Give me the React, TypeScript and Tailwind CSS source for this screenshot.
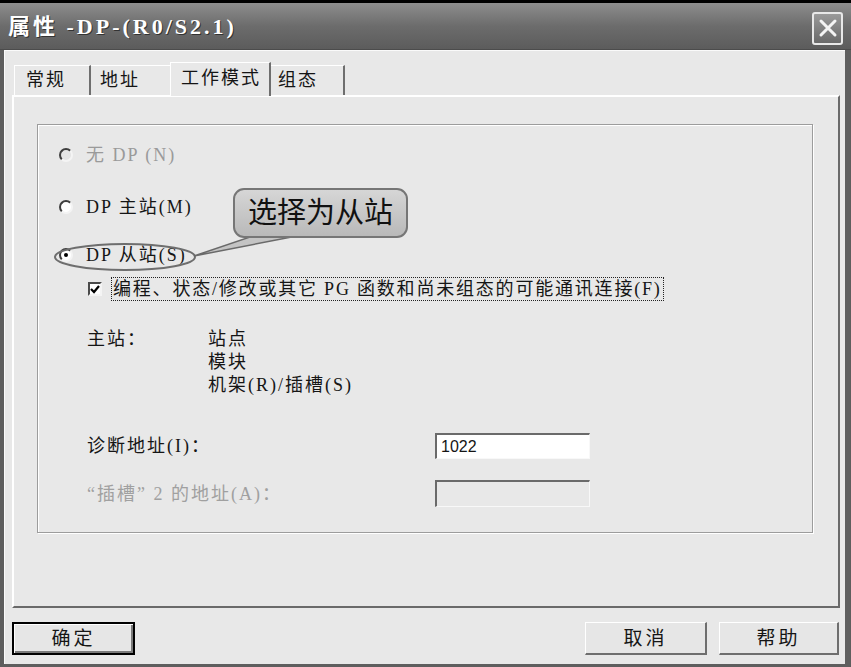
import React from 'react';

function Radio({ checked, disabled }: { checked?: boolean; disabled?: boolean }) {
  return (
    <span
      className={`relative inline-flex items-center justify-center w-[14px] h-[14px] rounded-full border-2 border-t-[#3e3e3e] border-l-[#3e3e3e] border-b-[#f4f4f4] border-r-[#f4f4f4] ${
        disabled ? 'bg-[#e4e4e4]' : 'bg-white'
      }`}
    >
      {checked && <span className="w-[4px] h-[4px] rounded-full bg-black" />}
    </span>
  );
}

function Button({ label, primary }: { label: string; primary?: boolean }) {
  return (
    <div
      className={`h-[33px] flex items-center justify-center bg-[#e6e6e6] ${
        primary
          ? 'w-[123px] border-2 border-black shadow-[inset_1px_1px_0_#fff,inset_-2px_-2px_0_#7a7a7a]'
          : 'border-t border-l border-white border-r-2 border-b-2 border-r-[#6e6e6e] border-b-[#6e6e6e]'
      }`}
    >
      <span className="text-[19px] leading-none tracking-[3px]">{label}</span>
    </div>
  );
}

export default function App() {
  return (
    <div className="relative w-[851px] h-[667px] bg-[#5e5e5e] border-t-[3px] border-black flex flex-col overflow-hidden font-['Liberation_Serif','Noto_Sans_CJK_SC',serif] text-[18px] tracking-[2px] text-[#151515]">
      {/* title bar */}
      <div className="h-[47px] shrink-0 flex items-center justify-between pl-[8px] pr-[8px] bg-gradient-to-b from-[#8e8e8e] via-[#6c6c6c] to-[#5c5c5c] border-b border-[#4c4c4c]">
        <span className="text-[22px] font-bold text-white tracking-[3px] [text-shadow:1px_1px_0_#333]">
          属性 -DP-(R0/S2.1)
        </span>
        <div className="w-[31px] h-[33px] mt-[4px] rounded-[3px] border-2 border-[#e8e8e8] bg-gradient-to-b from-[#9a9a9a] to-[#6a6a6a] flex items-center justify-center">
          <svg width="20" height="20" viewBox="0 0 20 20">
            <path d="M3 3 L17 17 M17 3 L3 17" stroke="#f4f4f4" strokeWidth="3" strokeLinecap="round" />
          </svg>
        </div>
      </div>

      {/* body */}
      <div className="flex-1 ml-[4px] mr-[6px] mb-[3px] bg-[#e8e8e8] border-l border-t border-[#fafafa] flex flex-col pt-[11px]">
        <div className="ml-[7px] mr-[5px] flex flex-col">
          {/* tabs */}
          <div className="h-[33px] flex items-end pl-[2px]">
            <div className="w-[77px] h-[30px] pl-[11px] flex items-center border-t border-l border-white border-r-2 border-r-[#6e6e6e]">常规</div>
            <div className="w-[79px] h-[30px] pl-[9px] flex items-center border-t border-white">地址</div>
            <div className="relative z-10 w-[101px] h-[34px] -mb-[1px] pl-[10px] pb-[3px] flex items-center bg-[#e8e8e8] border-t border-l border-white border-r-2 border-r-[#6e6e6e]">
              工作模式
            </div>
            <div className="w-[74px] h-[30px] pl-[7px] flex items-center border-t border-white border-r-2 border-r-[#6e6e6e]">组态</div>
          </div>

          {/* panel */}
          <div className="h-[513px] border-t-2 border-l-2 border-white border-r-2 border-b-2 border-r-[#6a6a6a] border-b-[#6a6a6a] pt-[27px] pl-[23px] pr-[25px]">
            <div className="h-[409px] border border-[#9c9c9c] shadow-[inset_1px_1px_0_#fff,1px_1px_0_#fff] flex flex-col pl-[21px]">
              <div className="mt-[18px] h-[24px] flex items-center">
                <Radio disabled />
                <span className="ml-[13px] leading-none text-[#9a9a9a]">无 DP (N)</span>
              </div>
              <div className="mt-[28px] h-[24px] flex items-center">
                <Radio />
                <span className="ml-[13px] leading-none">DP 主站(M)</span>
              </div>
              <div className="mt-[24px] h-[24px] flex items-center">
                <Radio checked />
                <span className="ml-[13px] leading-none">DP 从站(S)</span>
              </div>
              <div className="mt-[10px] h-[24px] flex items-center ml-[29px]">
                <span className="w-[14px] h-[14px] flex items-center justify-center bg-white border-2 border-t-[#4a4a4a] border-l-[#4a4a4a] border-b-[#f4f4f4] border-r-[#f4f4f4]">
                  <svg width="10" height="10" viewBox="0 0 10 10">
                    <path d="M1 5 L4 8 L9 2" stroke="#000" strokeWidth="2.2" fill="none" />
                  </svg>
                </span>
                <span className="ml-[9px] px-[1px] py-[2px] leading-none border border-dotted border-[#222] tracking-[1.8px]">
                  编程、状态/修改或其它 PG 函数和尚未组态的可能通讯连接(F)
                </span>
              </div>

              <div className="mt-[27px] ml-[28px] flex leading-[23px]">
                <span className="w-[121px]">主站：</span>
                <div className="flex flex-col">
                  <span>站点</span>
                  <span>模块</span>
                  <span>机架(R)/插槽(S)</span>
                </div>
              </div>

              <div className="mt-[36px] ml-[28px] h-[26px] flex items-center">
                <span className="w-[348px] leading-none">诊断地址(I)：</span>
                <div className="w-[155px] h-[26px] bg-white border-t-2 border-l-2 border-[#6a6a6a] border-b border-r border-b-[#f8f8f8] border-r-[#f8f8f8] flex items-center pl-[4px] text-[16px] tracking-[0px] font-['Liberation_Sans',sans-serif]">
                  1022
                </div>
              </div>

              <div className="mt-[21px] ml-[28px] h-[27px] flex items-center">
                <span className="w-[348px] leading-none text-[#a0a0a0]">“插槽” 2 的地址(A)：</span>
                <div className="w-[155px] h-[27px] bg-[#e8e8e8] border-t-2 border-l-2 border-[#6a6a6a] border-b border-r border-b-[#f8f8f8] border-r-[#f8f8f8]" />
              </div>
            </div>
          </div>
        </div>

        {/* buttons */}
        <div className="mt-[14px] ml-[7px] mr-[6px] flex">
          <Button label="确定" primary />
          <div className="flex-1" />
          <div className="w-[122px]">
            <Button label="取消" />
          </div>
          <div className="w-[120px] ml-[12px]">
            <Button label="帮助" />
          </div>
        </div>
      </div>

      {/* annotation: ellipse + callout */}
      <svg className="absolute left-0 top-0 pointer-events-none" width="851" height="667">
        <ellipse cx="125" cy="254" rx="70" ry="13" fill="none" stroke="#6e6e6e" strokeWidth="2" />
        <polygon points="194,253 256,232 302,232" fill="#c4c4c4" stroke="#6a6a6a" strokeWidth="1.5" />
      </svg>
      <div className="absolute left-[233px] top-[185px] w-[175px] h-[50px] rounded-[11px] border-2 border-[#767676] bg-gradient-to-b from-[#d6d6d6] to-[#b9b9b9] flex items-center justify-center">
        <span className="text-[29px] leading-none tracking-[0px] text-[#111]">选择为从站</span>
      </div>
    </div>
  );
}
